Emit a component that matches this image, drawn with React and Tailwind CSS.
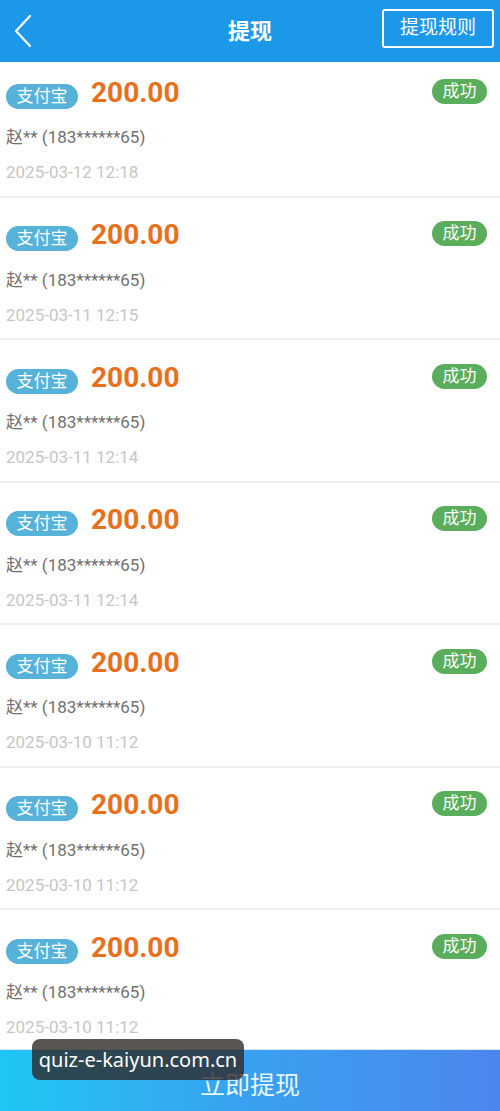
import React from "react";

const records = [
  "2025-03-12 12:18",
  "2025-03-11 12:15",
  "2025-03-11 12:14",
  "2025-03-11 12:14",
  "2025-03-10 11:12",
  "2025-03-10 11:12",
  "2025-03-10 11:12",
];

const font = { fontFamily: 'Roboto, "Noto Sans CJK SC", sans-serif' };

function Item({ date, first }) {
  return (
    <div
      className={`border-b-2 border-[#f0f0f0] pl-[6px] pr-[13px] pb-[11.5px] ${first ? "pt-[19px]" : "pt-[26px]"}`}
    >
      <div className="flex h-[30px] items-center">
        <span className="flex h-[25px] w-[72px] items-center justify-center rounded-full bg-[#56b2d8] text-[17px] leading-none text-white">
          支付宝
        </span>
        <span className="-mt-[7px] ml-[13px] text-[28px] font-bold leading-none text-[#e8701c]">
          200.00
        </span>
        <span className="ml-auto -mt-[10px] flex h-[25px] w-[55px] items-center justify-center rounded-full bg-[#5aad5a] text-[17px] leading-none text-white">
          成功
        </span>
      </div>
      <div className="mt-[14px] h-[24px] text-[17px] leading-[24px] text-[#707070]">
        赵** (183******65)
      </div>
      <div className="mt-[11px] h-[24px] text-[17px] leading-[24px] text-[#c6c6c6]">
        {date}
      </div>
    </div>
  );
}

export default function App() {
  return (
    <div className="relative flex h-[1111px] w-[500px] flex-col overflow-hidden bg-white" style={font}>
      <div className="relative flex h-[62px] shrink-0 items-center justify-center bg-[#1b98e8]">
        <svg
          className="absolute left-[12px] top-[14px]"
          width="22"
          height="34"
          viewBox="0 0 22 34"
          fill="none"
          stroke="white"
          strokeWidth="2.2"
          strokeLinecap="round"
          strokeLinejoin="round"
        >
          <path d="M18 2 L4 17 L18 32" />
        </svg>
        <span className="text-[22px] font-bold text-white">提现</span>
        <div className="absolute right-[6px] top-[9px] flex h-[39px] w-[112px] items-center justify-center rounded-[3px] border-2 border-white text-[19px] text-white">
          提现规则
        </div>
      </div>
      <div className="flex-1 overflow-hidden">
        {records.map((d, i) => (
          <Item key={i} date={d} first={i === 0} />
        ))}
      </div>
      <div className="flex h-[62px] shrink-0 items-center justify-center border-t border-[#d8e4ee] bg-gradient-to-r from-[#1dc6f4] via-[#38a0f0] to-[#4a86ec] pt-[10px] text-[25px] text-[#e8f6ff]">
        立即提现
      </div>
      <div
        className="absolute left-[32px] top-[1039px] flex h-[41px] w-[212px] items-center justify-center rounded-[8px] bg-[rgba(45,38,36,0.78)] text-[20px] text-white"
        style={{ fontFamily: '"Noto Sans", "Open Sans", sans-serif' }}
      >
        quiz-e-kaiyun.com.cn
      </div>
    </div>
  );
}
